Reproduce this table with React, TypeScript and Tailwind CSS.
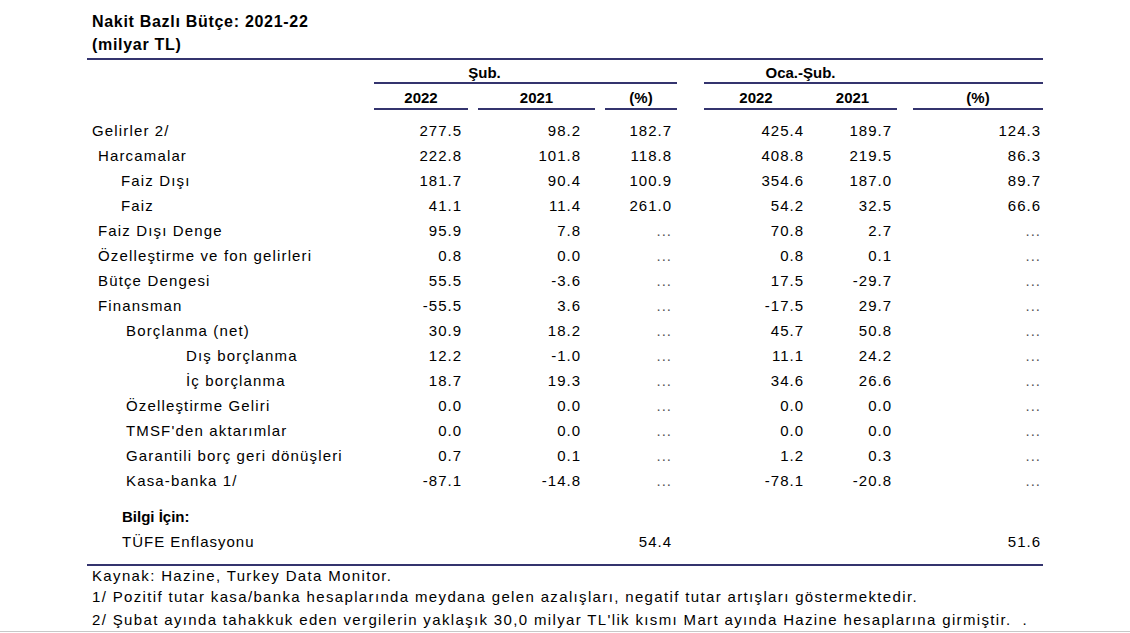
const navy = "border-[#34346e]";

type Row = { label: string; indent: string; v: string[] };

const rows: Row[] = [
  { label: "Gelirler 2/", indent: "pl-[5px]", v: ["277.5", "98.2", "182.7", "425.4", "189.7", "124.3"] },
  { label: "Harcamalar", indent: "pl-[11px]", v: ["222.8", "101.8", "118.8", "408.8", "219.5", "86.3"] },
  { label: "Faiz Dışı", indent: "pl-[34px]", v: ["181.7", "90.4", "100.9", "354.6", "187.0", "89.7"] },
  { label: "Faiz", indent: "pl-[34px]", v: ["41.1", "11.4", "261.0", "54.2", "32.5", "66.6"] },
  { label: "Faiz Dışı Denge", indent: "pl-[11px]", v: ["95.9", "7.8", "...", "70.8", "2.7", "..."] },
  { label: "Özelleştirme ve fon gelirleri", indent: "pl-[11px]", v: ["0.8", "0.0", "...", "0.8", "0.1", "..."] },
  { label: "Bütçe Dengesi", indent: "pl-[11px]", v: ["55.5", "-3.6", "...", "17.5", "-29.7", "..."] },
  { label: "Finansman", indent: "pl-[11px]", v: ["-55.5", "3.6", "...", "-17.5", "29.7", "..."] },
  { label: "Borçlanma (net)", indent: "pl-[39px]", v: ["30.9", "18.2", "...", "45.7", "50.8", "..."] },
  { label: "Dış borçlanma", indent: "pl-[99px]", v: ["12.2", "-1.0", "...", "11.1", "24.2", "..."] },
  { label: "İç borçlanma", indent: "pl-[99px]", v: ["18.7", "19.3", "...", "34.6", "26.6", "..."] },
  { label: "Özelleştirme Geliri", indent: "pl-[39px]", v: ["0.0", "0.0", "...", "0.0", "0.0", "..."] },
  { label: "TMSF'den aktarımlar", indent: "pl-[39px]", v: ["0.0", "0.0", "...", "0.0", "0.0", "..."] },
  { label: "Garantili borç geri dönüşleri", indent: "pl-[39px]", v: ["0.7", "0.1", "...", "1.2", "0.3", "..."] },
  { label: "Kasa-banka 1/", indent: "pl-[39px]", v: ["-87.1", "-14.8", "...", "-78.1", "-20.8", "..."] },
];

const grid =
  "grid grid-cols-[287px_94px_10px_117px_10px_72px_27px_104px_89px_16px_130px]";

function DataRow({ r }: { r: Row }) {
  const cell = (s: string) => (s === "..." ? "text-[#555]" : "");
  return (
    <div className={`${grid} h-[25px] items-center leading-[25px] tracking-[1px]`}>
      <div className={`${r.indent} tracking-[1.15px]`}>{r.label}</div>
      <div className={`text-right pr-[6px] ${cell(r.v[0])}`}>{r.v[0]}</div>
      <div />
      <div className={`text-right pr-[14px] ${cell(r.v[1])}`}>{r.v[1]}</div>
      <div />
      <div className={`text-right pr-[5px] ${cell(r.v[2])}`}>{r.v[2]}</div>
      <div />
      <div className={`text-right pr-[4px] ${cell(r.v[3])}`}>{r.v[3]}</div>
      <div className={`text-right pr-[5px] ${cell(r.v[4])}`}>{r.v[4]}</div>
      <div />
      <div className={`text-right pr-[2px] ${cell(r.v[5])}`}>{r.v[5]}</div>
    </div>
  );
}

export default function App() {
  return (
    <div className="w-[1130px] h-[633px] bg-white text-black font-['Liberation_Sans',Arial,sans-serif] flex flex-col overflow-hidden">
      <div className="ml-[87px] w-[956px] text-[15px]">
        <div className="pl-[5px] pt-[10px] font-bold text-[16px] leading-[23px] tracking-[0.7px]">
          <div>Nakit Bazlı Bütçe: 2021-22</div>
          <div>(milyar TL)</div>
        </div>
        <div className={`mt-[2px] border-t-2 ${navy}`} />

        {/* header row 1 */}
        <div className={`${grid} font-bold leading-[18px]`}>
          <div />
          <div className={`col-span-5 border-b-2 ${navy} pt-[4px]`}>
            <div className="w-[221px] text-center">Şub.</div>
          </div>
          <div />
          <div className={`col-span-4 border-b-2 ${navy} pt-[4px]`}>
            <div className="w-[193px] text-center">Oca.-Şub.</div>
          </div>
        </div>

        {/* header row 2 */}
        <div className={`${grid} font-bold leading-[18px]`}>
          <div />
          <div className={`border-b-2 ${navy} pt-[5px] pb-[1px] text-center`}>2022</div>
          <div />
          <div className={`border-b-2 ${navy} pt-[5px] pb-[1px] text-center`}>2021</div>
          <div />
          <div className={`border-b-2 ${navy} pt-[5px] pb-[1px] text-center`}>(%)</div>
          <div />
          <div className={`col-span-2 border-b-2 ${navy} pt-[5px] pb-[1px] flex`}>
            <div className="w-[104px] text-center">2022</div>
            <div className="w-[89px] text-center">2021</div>
          </div>
          <div />
          <div className={`border-b-2 ${navy} pt-[5px] pb-[1px] text-center`}>(%)</div>
        </div>

        <div className="mt-[8px]">
          {rows.map((r) => (
            <DataRow key={r.label} r={r} />
          ))}
        </div>

        <div className="mt-[11px]">
          <div className={`${grid} h-[25px] items-center leading-[25px]`}>
            <div className="pl-[35px] font-bold">Bilgi İçin:</div>
          </div>
          <div className={`${grid} h-[25px] items-center leading-[25px] tracking-[1px]`}>
            <div className="pl-[35px]">TÜFE Enflasyonu</div>
            <div />
            <div />
            <div />
            <div />
            <div className="text-right pr-[5px]">54.4</div>
            <div />
            <div />
            <div />
            <div />
            <div className="text-right pr-[2px]">51.6</div>
          </div>
        </div>

        <div className={`mt-[10px] border-t-2 ${navy}`} />

        <div className="pl-[5px] tracking-[1.35px]">
          <div className="h-[20px] leading-[20px]">Kaynak: Hazine, Turkey Data Monitor.</div>
          <div className="h-[22px] leading-[22px] whitespace-nowrap">
            1/ Pozitif tutar kasa/banka hesaplarında meydana gelen azalışları, negatif tutar artışları göstermektedir.
          </div>
          <div className="h-[23px] leading-[23px] whitespace-nowrap">
            2/ Şubat ayında tahakkuk eden vergilerin yaklaşık 30,0 milyar TL'lik kısmı Mart ayında Hazine hesaplarına girmiştir.&nbsp;&nbsp;.
          </div>
        </div>
      </div>
      <div className="w-full border-t border-[#c8c8c8]" />
    </div>
  );
}
